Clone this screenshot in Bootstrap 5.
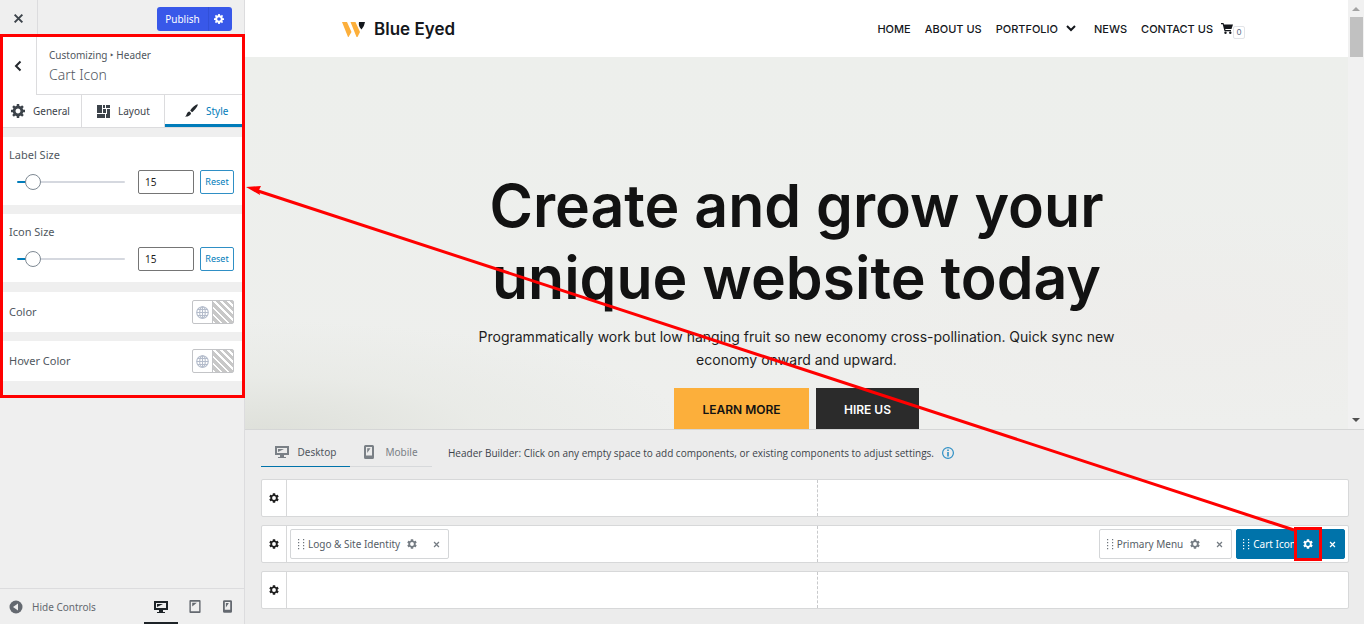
<!DOCTYPE html>
<html lang="en">
<head>
<meta charset="utf-8">
<meta name="viewport" content="width=device-width, initial-scale=1">
<title>Customize: Blue Eyed</title>
<link href="https://cdn.jsdelivr.net/npm/bootstrap@5.3.0/dist/css/bootstrap.min.css" rel="stylesheet">
<style>
body{font-family:"Noto Sans","Open Sans",sans-serif;font-size:10px;line-height:16px;color:#50575e;background:#eee}
button,input{font-family:inherit;font-size:inherit;line-height:inherit}
button{border:0;background:none;padding:0;color:inherit}
a{color:inherit;text-decoration:none}
svg{display:block;flex:none}
.sidebar{width:245px;border-right:1px solid #dcdcde;background:#efefef}
.topbar{height:37px}
.close-btn{width:38px;border-right:1px solid #dcdcde;color:#3c434a}
.publish{height:24px;margin:7px 12px 0 0;background:#3858e9;color:#fff;border-radius:3px;overflow:hidden;font-weight:600}
.publish-main{width:51px}
.publish-more{width:24px;border-left:1px solid #3150d8;padding-right:3px}
.back-btn{width:36px;color:#23282d}
.crumbs{border-left:1px solid #dcdcde;border-bottom:1px solid #dcdcde;padding:10px 12px 8px;height:58px}
.panel-title{font-size:14px;line-height:24px;font-weight:300;margin:0;color:#50575e}
.tabs{height:33px;border-bottom:1px solid #dcdcde;background:#fff;color:#3c434a}
.tab-item{gap:8px;border-right:1px solid #dcdcde}
.tab-item.first{width:82px;padding-left:11px}
.tab-item.second{width:83px;padding-left:15px;gap:7px}
.tab-item.third{border-right:0;border-bottom:3px solid #007cba;color:#007cba;padding:2px 0 0 20px}
.panel{background:#fff;padding:0 10px 0 9px;margin-top:9px}
.panel label,.panel .lbl{font-size:11px;line-height:16px}
.range-panel{height:68px;padding-top:10px}
.range-panel label{display:block;margin-bottom:7px}
.color-panel{height:40px}
.range-panel+.color-panel{margin-top:10px}
.slider{appearance:none;width:108px;height:16px;margin:0 13px 0 8px;background:none;flex:none}
.slider::-webkit-slider-runnable-track{height:2px;border-radius:1px;background:linear-gradient(90deg,#007cba 0 16px,#d5d8df 16px)}
.slider::-webkit-slider-thumb{appearance:none;width:16px;height:16px;margin-top:-7px;border:1px solid #7e8993;border-radius:50%;background:#fff}
.num{width:56px;height:24px;border:1px solid #757575;border-radius:2px;padding:0 6px;color:#1e1e1e;background:#fff;margin-right:6px}
.reset{width:34px;height:24px;border:1px solid #2f8fc5;border-radius:2px;color:#007cba;font-size:9px}
.swatches{border:1px solid #c3c4c7;border-radius:2px;height:24px}
.swatches button{width:20px}
.swatches .globe{color:#b4bccb;border-right:1px solid #c3c4c7}
.stripes{background:repeating-linear-gradient(45deg,#fff 0 2px,#c8c8c8 2px 5px)}
.footer{height:36px;border-top:1px solid #dcdcde;color:#646970}
.footer .device{width:33px;height:35px}
.footer .device.on{width:34px;color:#1d2327;border-bottom:2px solid #1d2327;padding-top:2px}
.mark-box{position:absolute;border:3px solid #f00;pointer-events:none;z-index:5}
.side-mark{inset:-3px 0 auto 0;height:364px;margin-right:-1px}
.gear-mark{inset:-3px -2px}
.preview,.preview button{font-family:Inter,"Open Sans",sans-serif}
.preview{min-height:0;border-bottom:1px solid #d5d6d6}
.site-head{height:57px;background:#fff;color:#14171c;padding:0 103px 0 96px}
.site-name{font-size:17px;line-height:24px;font-weight:600;gap:8px}
.menu{font-size:11px;font-weight:500;gap:14px}
.menu .drop{margin-right:4px}
.cart-count{width:12px;height:13px;border:1px solid #e2e4e8;border-radius:2px;font-size:8px;line-height:11px;font-weight:400;color:#5a6a84;margin-top:8px}
.hero{background:radial-gradient(ellipse 420px 110px at 2% 100%,#dee0da 0,rgba(230,232,227,.6) 50%,rgba(238,240,237,0) 100%),radial-gradient(ellipse 380px 110px at 85% 70%,#eeedeb,rgba(239,237,235,0)),linear-gradient(#edefec,#eeefed);color:#121212;padding-top:113px}
.hero h1{font-size:59px;line-height:72px;font-weight:600;margin:0 0 11px}
.hero p{font-size:14px;line-height:23px;margin:0 0 17px;color:#1d1d1d}
.cta{height:43px;font-weight:600;font-size:12px}
.cta.learn{background:#fcaf3b;width:135px}
.cta.hire{background:#2b2b2b;color:#fff;width:103px}
.scroller{width:16px;background:#f1f1f1;padding:6px 0}
.scroll-thumb{width:13px;height:40px;background:#c1c1c1;margin-top:6px}
.builder{background:#ececec;padding:8px 15px 15px 16px}
.builder-head{margin-bottom:12px}
.device-tab{width:82px;height:29px;gap:11px;border-bottom:1px solid #d7d9db;color:#7a8086}
.device-tab.on{width:89px;gap:9px;border-color:#0073aa}
.device-tab.on span{color:#50575e}
.hint{color:#3c434a;font-family:"Open Sans","Noto Sans",sans-serif}
.hint b{font-weight:500}
.zone{height:38px;background:#fff;border:1px solid #d7d8d9;border-radius:2px}
.row-gear{width:25px;border-right:1px solid #d7d8d9;color:#1e1e1e}
.zone-half{flex:1 1 0;padding:3px}
.zone-half+.zone-half{border-left:1px dashed #c8c9cb;margin-left:-1px}
.chip{height:30px;border:1px solid #d4d6d8;border-radius:2px;color:#555d66;padding-left:7px;gap:3px}
.chip button{width:24px;height:28px;color:#757c83}
.chip button+button{margin-left:-3px}
.chip span+button{margin-left:-3px}
.chip>svg{color:#6f767c}
.chip.blue{background:#0073aa;border-color:#0073aa;color:#fff;padding-left:6px}
.chip.blue>svg,.chip.blue button{color:#fff}
.arrow-line{left:255px;right:70px;top:190px;bottom:94px;z-index:4;pointer-events:none}
.arrow-line svg{width:100%;height:100%;overflow:visible}
.arrow-head{left:246px;top:185px;z-index:4;pointer-events:none}
</style>
</head>
<body>
<svg width="0" height="0" class="position-absolute" aria-hidden="true">
<symbol id="gear8" viewBox="1 2 17 17"><path fill="currentColor" fill-rule="evenodd" d="M18 12h-2.18c-.17.7-.44 1.35-.81 1.93l1.54 1.54-2.1 2.1-1.54-1.54c-.58.36-1.23.63-1.91.79V19H8v-2.18c-.68-.16-1.33-.43-1.91-.79l-1.54 1.54-2.12-2.12 1.54-1.54c-.36-.58-.63-1.23-.79-1.91H1V9.03h2.17c.16-.7.44-1.35.8-1.94L2.43 5.55l2.1-2.1 1.54 1.54c.58-.37 1.24-.64 1.93-.81V2h3v2.18c.68.16 1.33.43 1.91.79l1.54-1.54 2.12 2.12-1.54 1.54c.36.59.64 1.24.8 1.94H18V12zm-8.5 1.5c1.66 0 3-1.34 3-3s-1.34-3-3-3-3 1.34-3 3 1.34 3 3 3z"/></symbol>
<symbol id="gear6" viewBox="2 2 20 20"><path fill="currentColor" fill-rule="evenodd" d="M19.14 12.94c.04-.3.06-.61.06-.94 0-.32-.02-.64-.07-.94l2.03-1.58c.18-.14.23-.41.12-.61l-1.92-3.32c-.12-.22-.37-.29-.59-.22l-2.39.96c-.5-.38-1.03-.7-1.62-.94l-.36-2.54c-.04-.24-.24-.41-.48-.41h-3.84c-.24 0-.43.17-.47.41l-.36 2.54c-.59.24-1.13.57-1.62.94l-2.39-.96c-.22-.08-.47 0-.59.22L2.74 8.87c-.12.21-.08.47.12.61l2.03 1.58c-.05.3-.09.63-.09.94s.02.64.07.94l-2.03 1.58c-.18.14-.23.41-.12.61l1.92 3.32c.12.22.37.29.59.22l2.39-.96c.5.38 1.03.7 1.62.94l.36 2.54c.05.24.24.41.48.41h3.84c.24 0 .44-.17.47-.41l.36-2.54c.59-.24 1.13-.56 1.62-.94l2.39.96c.22.08.47 0 .59-.22l1.92-3.32c.12-.22.07-.47-.12-.61l-2.01-1.58zM12 15.8a3.8 3.8 0 1 1 0-7.6 3.8 3.8 0 0 1 0 7.6z"/></symbol>
<symbol id="cross" viewBox="0 0 10 10"><path d="M1.5 1.5l7 7m0-7l-7 7" stroke="currentColor" stroke-width="1.8"/></symbol>
<symbol id="desktop" viewBox="0 0 14 14"><path fill="currentColor" fill-rule="evenodd" d="M0 1h14v9H9v2h2v1H3v-1h2v-2H0zM2 3v5h10V3zM3 4h6L3 7z"/></symbol>
<symbol id="tablet" viewBox="0 0 12 14"><path fill="currentColor" fill-rule="evenodd" d="M1 0h10q1 0 1 1v12q0 1-1 1H1q-1 0-1-1V1q0-1 1-1zM1.500 2v10h9V2zM3 3h5L3 7z"/></symbol>
<symbol id="phone" viewBox="0 0 10 14"><path fill="currentColor" fill-rule="evenodd" d="M1.500 0h7Q10 0 10 1.500v11Q10 14 8.500 14h-7Q0 14 0 12.500v-11Q0 0 1.500 0zM2 2v8.500h6V2zM3.200 3.200H6.500L3.200 8z"/></symbol>
<symbol id="dots" viewBox="0 0 7 11"><path fill="currentColor" d="M0 0h1.200v1.200H0zM5 0h1.200v1.200H5zM0 3h1.200v1.200H0zM5 3h1.200v1.200H5zM0 6h1.200v1.200H0zM5 6h1.200v1.200H5zM0 9h1.200v1.200H0zM5 9h1.200v1.200H5z"/></symbol>
<symbol id="globe" viewBox="0 0 14 14"><g fill="none" stroke="currentColor" stroke-width="1.200"><circle cx="7" cy="7" r="6.200"/><ellipse cx="7" cy="7" rx="3" ry="6.200"/><path d="M7 .8v12.400M.8 7h12.400M1.800 3.800h10.400M1.800 10.200h10.400"/></g></symbol>
</svg>
<div class="d-flex vh-100 position-relative overflow-hidden">
<aside class="sidebar d-flex flex-column flex-shrink-0">
  <div class="topbar d-flex justify-content-between flex-shrink-0">
    <button class="close-btn d-flex align-items-center justify-content-center" aria-label="Close"><svg width="11" height="11"><use href="#cross"/></svg></button>
    <div class="publish d-flex align-self-start">
      <button class="publish-main">Publish</button>
      <button class="publish-more d-flex align-items-center justify-content-center" aria-label="Publish settings"><svg width="10" height="10"><use href="#gear8"/></svg></button>
    </div>
  </div>
  <div class="position-relative flex-grow-1">
    <div class="mark-box side-mark"></div>
    <div class="d-flex bg-white">
      <button class="back-btn d-flex align-items-center justify-content-center" aria-label="Back"><svg width="8" height="12" viewBox="0 0 8 12"><path d="M6.500 1.500L2 6l4.500 4.500" fill="none" stroke="currentColor" stroke-width="2"/></svg></button>
      <div class="crumbs flex-fill"><div>Customizing ‣ Header</div><h1 class="panel-title">Cart Icon</h1></div>
    </div>
    <div class="tabs d-flex">
      <button class="tab-item first d-flex align-items-center"><svg width="14" height="14"><use href="#gear8"/></svg>General</button>
      <button class="tab-item second d-flex align-items-center"><svg width="14" height="13" viewBox="0 0 14 13"><path fill="currentColor" d="M0 0h5v8H0zM6 0h2v3H6zM6 4h3v4H6zM9 0h4v3H9zM0 9h8v4H0zM10 4h3v9H9V9h1z"/></svg>Layout</button>
      <button class="tab-item third d-flex align-items-center flex-fill"><svg width="13" height="13" viewBox="0 0 13 13"><path fill="#23282d" d="M12.800.2C11 .3 7 3.500 5.200 6.600L7 8.300C10 6 13 2 12.800.2zM4.500 7.500L6 9c0 2-2.500 3.800-6 3.700C2 11.500 1.500 8 4.500 7.500z"/></svg>Style</button>
    </div>
    <section class="panel range-panel">
      <label for="labelSize">Label Size</label>
      <div class="d-flex align-items-center"><input class="slider" type="range" min="0" max="172" value="15" aria-label="Label size slider"><input class="num" id="labelSize" type="text" value="15"><button class="reset">Reset</button></div>
    </section>
    <section class="panel range-panel">
      <label for="iconSize">Icon Size</label>
      <div class="d-flex align-items-center"><input class="slider" type="range" min="0" max="172" value="15" aria-label="Icon size slider"><input class="num" id="iconSize" type="text" value="15"><button class="reset">Reset</button></div>
    </section>
    <section class="panel color-panel d-flex align-items-center justify-content-between"><span class="lbl">Color</span>
      <div class="swatches d-flex"><button class="globe d-flex align-items-center justify-content-center" aria-label="Global colour"><svg width="13" height="13"><use href="#globe"/></svg></button><button class="stripes" aria-label="Pick colour"></button></div></section>
    <section class="panel color-panel d-flex align-items-center justify-content-between"><span class="lbl">Hover Color</span>
      <div class="swatches d-flex"><button class="globe d-flex align-items-center justify-content-center" aria-label="Global hover colour"><svg width="13" height="13"><use href="#globe"/></svg></button><button class="stripes" aria-label="Pick hover colour"></button></div></section>
  </div>
  <div class="footer d-flex align-items-center flex-shrink-0">
    <button class="d-flex align-items-center gap-2 ms-2 me-auto"><svg width="16" height="16" viewBox="0 0 16 16"><circle cx="8" cy="8" r="6.500" fill="currentColor"/><path fill="#efefef" d="M10 4.500v7L5 8z"/></svg>Hide Controls</button>
    <button class="device on d-flex align-items-center justify-content-center" aria-label="Desktop"><svg width="14" height="14"><use href="#desktop"/></svg></button>
    <button class="device d-flex align-items-center justify-content-center" aria-label="Tablet"><svg width="12" height="13"><use href="#tablet"/></svg></button>
    <button class="device d-flex align-items-center justify-content-center" aria-label="Mobile"><svg width="9" height="13"><use href="#phone"/></svg></button>
  </div>
</aside>
<main class="d-flex flex-column flex-fill">
  <div class="preview d-flex flex-fill overflow-hidden">
    <div class="flex-fill d-flex flex-column">
      <header class="site-head d-flex align-items-center justify-content-between flex-shrink-0">
        <a href="#" class="site-name d-flex align-items-center"><svg width="25" height="16" viewBox="0 0 25 16"><path fill="#fcaf3b" d="M1 1h5l4.500 10-3 5H7zM9.500 1h5l4.500 10-2.500 5h-1z"/><path fill="#14171c" d="M18 1h6q-.5 4-3.500 7.500Q17 5 18 1z"/></svg>Blue Eyed</a>
        <nav class="menu d-flex align-items-center"><a href="#">HOME</a><a href="#">ABOUT US</a><a href="#" class="drop d-flex align-items-center gap-2">PORTFOLIO<svg width="10" height="7" viewBox="0 0 10 7"><path d="M1 1l4 4 4-4" fill="none" stroke="currentColor" stroke-width="2"/></svg></a><a href="#">NEWS</a>
        <span class="d-flex align-items-center gap-2"><a href="#">CONTACT US</a><a href="#" class="d-flex align-items-center" aria-label="Cart"><svg width="12" height="11" viewBox="0 0 12 11"><path fill="currentColor" d="M0 0h2.500l.5 1.500h9L10.500 6H4.200l.3 1H10v1.200H3.500L1.700 1.200H0z"/><circle cx="4.500" cy="9.700" r="1.200" fill="currentColor"/><circle cx="9.300" cy="9.700" r="1.200" fill="currentColor"/></svg><span class="cart-count text-center">0</span></a></span></nav>
      </header>
      <section class="hero flex-fill text-center">
        <h1>Create and grow your<br>unique website today</h1>
        <p>Programmatically work but low hanging fruit so new economy cross-pollination. Quick sync new<br>economy onward and upward.</p>
        <div class="d-flex justify-content-center" style="gap:7px"><button class="cta learn">LEARN MORE</button><button class="cta hire">HIRE US</button></div>
      </section>
    </div>
    <div class="scroller d-flex flex-column align-items-center"><svg width="8" height="5"><path d="M0 5l4-4 4 4z" fill="#a3a3a3"/></svg><div class="scroll-thumb"></div><svg class="mt-auto" width="8" height="5"><path d="M0 0l4 4 4-4z" fill="#505050"/></svg></div>
  </div>
  <div class="builder flex-shrink-0">
    <div class="builder-head d-flex align-items-center">
      <button class="device-tab on d-flex align-items-center justify-content-center"><svg width="14" height="14"><use href="#desktop"/></svg><span>Desktop</span></button>
      <button class="device-tab d-flex align-items-center justify-content-center"><svg width="10" height="14"><use href="#phone"/></svg><span>Mobile</span></button>
      <span class="hint ms-3"><b>Header Builder:</b> Click on any empty space to add components, or existing components to adjust settings.</span>
      <button class="ms-2" aria-label="Info"><svg width="12" height="12" viewBox="0 0 12 12"><circle cx="6" cy="6" r="5.400" fill="none" stroke="#2f8fc5" stroke-width="1.200"/><path fill="#2f8fc5" d="M5.200 2.500h1.600V4H5.200zM5.200 5h1.600v4.500H5.200z"/></svg></button>
    </div>
    <div class="d-flex flex-column gap-2">
      <div class="zone d-flex"><button class="row-gear d-flex align-items-center justify-content-center" aria-label="Top row settings"><svg width="10" height="10"><use href="#gear6"/></svg></button><div class="zone-half"></div><div class="zone-half"></div></div>
      <div class="zone d-flex"><button class="row-gear d-flex align-items-center justify-content-center" aria-label="Main row settings"><svg width="10" height="10"><use href="#gear6"/></svg></button>
        <div class="zone-half d-flex"><div class="chip d-flex align-items-center"><svg width="7" height="11"><use href="#dots"/></svg><span>Logo &amp; Site Identity</span><button class="d-flex align-items-center justify-content-center" aria-label="Logo settings"><svg width="10" height="10"><use href="#gear6"/></svg></button><button class="d-flex align-items-center justify-content-center" aria-label="Remove logo"><svg width="7" height="7"><use href="#cross"/></svg></button></div></div>
        <div class="zone-half d-flex justify-content-end gap-1"><div class="chip d-flex align-items-center"><svg width="7" height="11"><use href="#dots"/></svg><span>Primary Menu</span><button class="d-flex align-items-center justify-content-center" aria-label="Menu settings"><svg width="10" height="10"><use href="#gear6"/></svg></button><button class="d-flex align-items-center justify-content-center" aria-label="Remove menu"><svg width="7" height="7"><use href="#cross"/></svg></button></div>
        <div class="chip blue d-flex align-items-center"><svg width="7" height="11"><use href="#dots"/></svg><span>Cart Icon</span><button class="position-relative d-flex align-items-center justify-content-center" aria-label="Cart settings"><svg width="10" height="10"><use href="#gear6"/></svg><span class="mark-box gear-mark"></span></button><button class="d-flex align-items-center justify-content-center" aria-label="Remove cart"><svg width="7" height="7"><use href="#cross"/></svg></button></div></div>
      </div>
      <div class="zone d-flex"><button class="row-gear d-flex align-items-center justify-content-center" aria-label="Bottom row settings"><svg width="10" height="10"><use href="#gear6"/></svg></button><div class="zone-half"></div><div class="zone-half"></div></div>
    </div>
  </div>
</main>
<div class="arrow-line position-absolute"><svg viewBox="0 0 100 100" preserveAspectRatio="none"><path d="M0 0L100 100" stroke="#f00" stroke-width="3" vector-effect="non-scaling-stroke"/></svg></div>
<div class="arrow-head position-absolute"><svg width="16" height="12"><path d="M0 2L15 1l-2 4 1 5z" fill="#f00"/></svg></div>
</div>
<script src="https://cdn.jsdelivr.net/npm/bootstrap@5.3.0/dist/js/bootstrap.bundle.min.js"></script>
</body>
</html>
